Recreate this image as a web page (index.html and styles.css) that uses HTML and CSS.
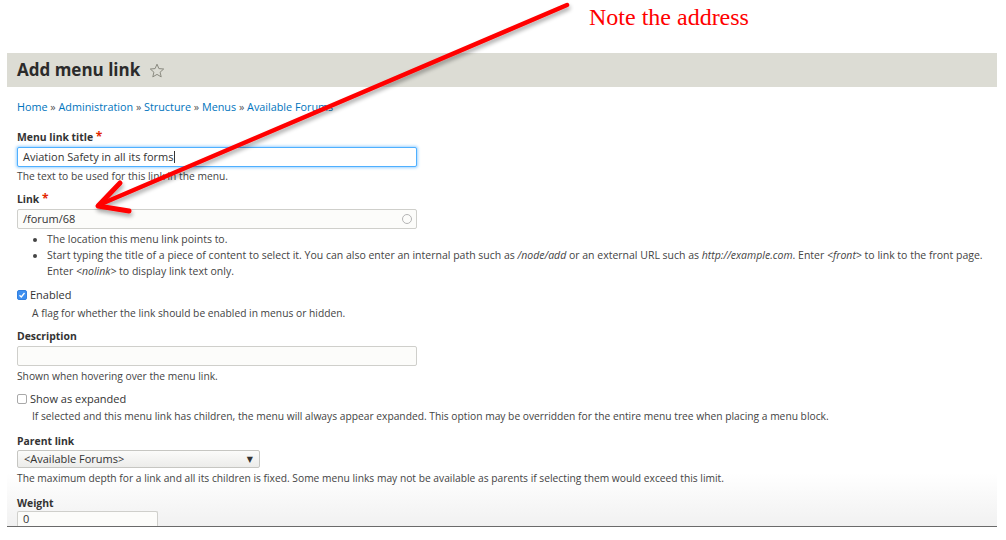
FILE: index.html
```html
<!DOCTYPE html>
<html>
<head>
<meta charset="utf-8">
<link rel="stylesheet" href="styles.css">
</head>
<body>
<div class="annot">Note the address</div>
<div class="page">
  <div class="titlebar">
    <h1>Add menu link</h1>
    <svg class="star" width="16" height="16" viewBox="0 0 16 16"><path d="M8 1.2l1.9 4.4 4.8.4-3.6 3.2 1.1 4.7L8 11.4l-4.2 2.5 1.1-4.7L1.3 6l4.8-.4z" fill="none" stroke="#8a8a80" stroke-width="1"/></svg>
  </div>
  <div class="content">
    <div class="crumbs"><a>Home</a> » <a>Administration</a> » <a>Structure</a> » <a>Menus</a> » <a>Available Forums</a></div>

    <div class="field">
      <div class="label">Menu link title <span class="req">*</span></div>
      <div class="input wide focus">Aviation Safety in all its forms<span class="caret"></span></div>
      <div class="desc">The text to be used for this link in the menu.</div>
    </div>

    <div class="field">
      <div class="label">Link <span class="req">*</span></div>
      <div class="input wide auto">/forum/68<span class="throbber"></span></div>
      <ul class="bullets">
        <li>The location this menu link points to.</li>
        <li>Start typing the title of a piece of content to select it. You can also enter an internal path such as <em>/node/add</em> or an external URL such as <em>http://example.com</em>. Enter <em>&lt;front&gt;</em> to link to the front page.<br>Enter <em>&lt;nolink&gt;</em> to display link text only.</li>
      </ul>
    </div>

    <div class="field">
      <div class="check"><span class="box on"><svg width="8" height="8" viewBox="0 0 8 8"><path d="M1.5 4.2l1.8 1.8 3.2-4" fill="none" stroke="#fff" stroke-width="1.3"/></svg></span>Enabled</div>
      <div class="desc indent">A flag for whether the link should be enabled in menus or hidden.</div>
    </div>

    <div class="field">
      <div class="label">Description</div>
      <div class="input wide"></div>
      <div class="desc after-input">Shown when hovering over the menu link.</div>
    </div>

    <div class="field">
      <div class="check"><span class="box"></span>Show as expanded</div>
      <div class="desc indent tight">If selected and this menu link has children, the menu will always appear expanded. This option may be overridden for the entire menu tree when placing a menu block.</div>
    </div>

    <div class="field spaced">
      <div class="label close">Parent link</div>
      <div class="select">&lt;Available Forums&gt;<span class="arrow">▼</span></div>
      <div class="desc after-input">The maximum depth for a link and all its children is fixed. Some menu links may not be available as parents if selecting them would exceed this limit.</div>
    </div>

    <div class="field spaced">
      <div class="label close">Weight</div>
      <div class="input small">0</div>
    </div>
  </div>
</div>
<svg class="pointer" width="1006" height="540" viewBox="0 0 1006 540">
  <defs>
    <filter id="sh" x="-10%" y="-10%" width="120%" height="120%">
      <feGaussianBlur in="SourceAlpha" stdDeviation="2"/>
      <feOffset dx="1" dy="3"/>
      <feComponentTransfer><feFuncA type="linear" slope="0.35"/></feComponentTransfer>
      <feMerge><feMergeNode/><feMergeNode in="SourceGraphic"/></feMerge>
    </filter>
  </defs>
  <g filter="url(#sh)" stroke="#ff0000" fill="none" stroke-linecap="round" stroke-linejoin="round">
    <path d="M567 5 L101 204" stroke-width="4.5"/>
    <path d="M120 183 L98 206 L129 211" stroke-width="5"/>
  </g>
</svg>
</body>
</html>
```
FILE: styles.css
```css
html, body {
  margin: 0;
  padding: 0;
  background: #fff;
}
body {
  width: 1006px;
  height: 540px;
  overflow: hidden;
  position: relative;
  font-family: "Open Sans", "DejaVu Sans", sans-serif;
  color: #333;
}
.annot {
  height: 53px;
  padding-left: 589px;
  box-sizing: border-box;
  padding-top: 3px;
  font-family: "Liberation Serif", "DejaVu Serif", serif;
  font-size: 24px;
  color: #ff0000;
  line-height: 28px;
}
.page {
  margin-left: 7px;
  width: 990px;
  height: 474px;
  overflow: hidden;
  border-bottom: 1px solid #6a6a6a;
  box-sizing: border-box;
  background: linear-gradient(to bottom, #fff 0, #fff 420px, #f1f1f1 473px);
}
.titlebar {
  height: 34px;
  background: #dcdcd4;
  display: flex;
  align-items: center;
  padding-left: 10px;
  gap: 9px;
}
.titlebar h1 {
  margin: 0;
  font-size: 17px;
  font-weight: 700;
  color: #2b2b2b;
  line-height: 34px;
}
.star { margin-top: 1px; }
.content {
  padding: 12px 10px 0 10px;
}
.crumbs {
  font-size: 10.8px;
  line-height: 16px;
  color: #555;
  margin-bottom: 15px;
}
.crumbs a { color: #0074bd; }
.field { margin-bottom: 9px; }
.field.spaced { margin-top: 11px; }
.label {
  font-size: 10.4px;
  font-weight: 700;
  line-height: 14px;
  color: #333;
  margin-bottom: 3px;
}
.label.close { margin-bottom: 2px; }
.req { color: #e32700; font-size: 12px; }
.input {
  box-sizing: border-box;
  height: 20px;
  border: 1px solid #cfcfcb;
  border-radius: 2px;
  background: #fcfcfa;
  font-size: 11px;
  line-height: 18px;
  padding: 0 5px;
  color: #333;
  position: relative;
}
.wide { width: 400px; }
.small {
  width: 141px;
  height: 16px;
  border-bottom: none;
  line-height: 14px;
  margin-top: -1px;
}
.focus {
  border-color: #4fb0ff;
  box-shadow: 0 0 3px 1px #9fd3ff;
  background: #fff;
}
.caret {
  display: inline-block;
  width: 1px;
  height: 12px;
  background: #333;
  vertical-align: -2px;
}
.throbber {
  position: absolute;
  right: 4px;
  top: 4px;
  width: 8px;
  height: 8px;
  border: 1.5px solid #b5b5b5;
  border-radius: 50%;
}
.desc {
  font-size: 10.25px;
  line-height: 14px;
  color: #444;
  margin-top: 2px;
}
.desc.after-input { margin-top: 3px; }
.indent { margin-left: 15px; margin-top: 4px; }
.indent.tight { margin-top: 3px; }
.bullets {
  margin: 2px 0 0 0;
  padding-left: 30px;
  font-size: 10.5px;
  line-height: 16px;
  color: #444;
}
.check {
  font-size: 11px;
  line-height: 14px;
  display: flex;
  align-items: center;
  gap: 3px;
  color: #333;
}
.box {
  width: 8px;
  height: 8px;
  border: 1px solid #a9a9a9;
  border-radius: 2px;
  background: #fff;
  display: flex;
  align-items: center;
  justify-content: center;
}
.box.on {
  background: #3d8ff0;
  border-color: #3380e0;
}
.select {
  box-sizing: border-box;
  width: 243px;
  height: 18px;
  border: 1px solid #c6c6c2;
  border-radius: 2px;
  background: linear-gradient(#fbfbfa, #ececea);
  font-size: 11px;
  line-height: 16px;
  padding-left: 6px;
  position: relative;
  color: #333;
}
.arrow {
  position: absolute;
  right: 6px;
  top: 0;
  font-size: 8px;
  color: #333;
}
.pointer {
  position: absolute;
  left: 0;
  top: 0;
  pointer-events: none;
}
```
